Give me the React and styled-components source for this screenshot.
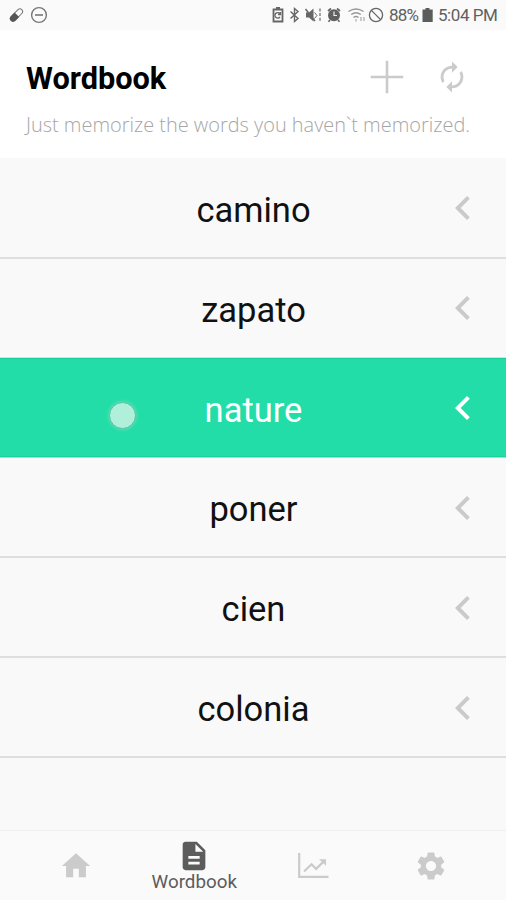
import React from "react";
import styled, { createGlobalStyle } from "styled-components";
import {
  MdAutorenew,
  MdChevronLeft,
  MdDescription,
  MdHome,
  MdSettings,
} from "react-icons/md";

const GlobalStyle = createGlobalStyle`
  * {
    box-sizing: border-box;
  }
  body {
    margin: 0;
    background-color: #fafafa;
    font-family: Roboto, "Liberation Sans", sans-serif;
  }
  svg {
    display: block;
    flex-shrink: 0;
  }
`;

const Screen = styled.div`
  display: flex;
  flex-direction: column;
  width: 506px;
  height: 900px;
  overflow: hidden;
`;

const StatusBar = styled.div`
  display: flex;
  justify-content: space-between;
  height: 30px;
  padding: 0 9px 0 8px;
  color: #606060;
  background-color: #fafafa;
`;

const StatusGroup = styled.div`
  display: flex;
  align-items: center;
  gap: ${({ gap }) => gap || 0}px;
  height: 30px;
`;

const StatusText = styled.span`
  width: ${({ width }) => width}px;
  padding-left: ${({ indent }) => indent || 0}px;
  font-size: 17px;
  line-height: 30px;
  letter-spacing: ${({ spacing }) => spacing}px;
  white-space: nowrap;
`;

const Header = styled.header`
  height: 128px;
  padding: 26px 26px 0;
  background-color: #fff;
`;

const TitleRow = styled.div`
  display: flex;
  align-items: center;
  justify-content: space-between;
  height: 42px;
`;

const Title = styled.h1`
  margin: 3px 0 0;
  font-size: 30.7px;
  font-weight: 700;
  line-height: 40px;
  color: #000;
`;

const Actions = styled.div`
  display: flex;
  align-items: center;
  gap: 31px;
  padding-right: 11.5px;
  color: #cbcbcb;
`;

const Subtitle = styled.p`
  margin: 14px 0 0;
  font-family: "Open Sans", "Noto Sans", sans-serif;
  font-size: 19.95px;
  font-weight: 300;
  line-height: 26px;
  color: #a6a6a6;
  white-space: nowrap;
`;

const WordList = styled.ul`
  flex: 1;
  margin: 0;
  padding: 0;
  list-style: none;
  background-color: #f9f9f9;
`;

const WordRow = styled.li`
  display: grid;
  grid-template-columns: 68px 1fr 48px;
  align-items: center;
  height: ${({ first }) => (first ? 101 : 99.8)}px;
  padding: 1px 19px 0 0;
  border-bottom: 2px solid #dedede;
  background-color: #f9f9f9;
  color: #cacaca;

  ${({ active }) =>
    active &&
    `
    margin: -1px 0 1px;
    padding-top: 2px;
    border-bottom: 1px solid #a9dccb;
    background-color: #23dda8;
    box-shadow: inset 0 1px #1bcd99, inset 0 -1px #1bd39d;
    color: #fff;
  `}
`;

const WordCell = styled.div`
  grid-column: 2;
  position: relative;
  display: flex;
  justify-content: center;
`;

const Word = styled.span`
  padding-top: 3px;
  font-size: 34.5px;
  line-height: 44px;
  text-align: center;
  color: ${({ active }) => (active ? "#fff" : "#111")};
`;

const TouchDot = styled.i`
  position: absolute;
  left: 41px;
  top: 17px;
  width: 27px;
  height: 27px;
  border: 1px solid #5cbfa3;
  border-radius: 50%;
  background-color: #b0f0da;
  box-shadow: 0 0 3px 1px rgba(120, 225, 190, 0.6);
`;

const TabBar = styled.nav`
  display: grid;
  grid-template-columns: repeat(4, 118.5px);
  justify-content: center;
  height: 70px;
  padding-left: 1px;
  border-top: 1px solid #f0f0f0;
  background-color: #fafafa;
`;

const Tab = styled.div`
  display: flex;
  flex-direction: column;
  align-items: center;
  padding-top: ${({ active }) => (active ? 8 : 18)}px;
  color: ${({ active }) => (active ? "#5c5c5c" : "#cbcbcb")};
`;

const TabLabel = styled.span`
  margin-top: -2px;
  font-size: 18.8px;
  line-height: 22px;
`;

const PillIcon = () => (
  <svg width="17" height="18" viewBox="0 0 17 18" fill="none">
    <g transform="rotate(45 8.5 9)">
      <rect x="5.8" y="1.5" width="5.4" height="15" rx="2.7" stroke="#777" strokeWidth="1" />
      <path d="M5.3 8.5h6.4v5.3a3.2 3.2 0 0 1-6.4 0z" fill="#555" />
    </g>
  </svg>
);

const MinusCircleIcon = () => (
  <svg width="18" height="18" viewBox="0 0 18 18" fill="none" stroke="#777">
    <circle cx="9" cy="9" r="7.4" strokeWidth="1.4" />
    <path d="M5 9h8" strokeWidth="1.6" />
  </svg>
);

// battery saver, bluetooth, mute, alarm, wifi, blocked
const DeviceIcons = () => (
  <svg width="118" height="30" viewBox="0 0 118 30" fill="none" stroke="#666">
    <path d="M2.5 9.5h9v12h-9zM5 8h4" strokeWidth="1.8" />
    <path d="M9.2 14A2.8 2.8 0 1 0 9 17M9.5 12v2.5H7" strokeWidth="1.3" />
    <path d="M19.5 11.5l7.500 7-3.500 3V8.500l3.500 3-7.500 7" strokeWidth="1.4" />
    <path d="M35 12.5h3l4.500-4v13l-4.500-4h-3z" fill="#666" stroke="none" />
    <path d="M34.500 9l9.500 12" strokeWidth="1.500" />
    <path d="M43.500 12.500l2.500 3-2.500 3" strokeWidth="1" />
    <path d="M49 8.500v13" strokeWidth="1.200" strokeDasharray="3 1.600" />
    <circle cx="63" cy="15.200" r="6" fill="#606060" stroke="none" />
    <path d="M57 11l3-2.500M66 8.500l3 2.500M59 20l-1.500 1.800M67 20l1.500 1.800" strokeWidth="1.700" />
    <path d="M63 11.500v4h3" stroke="#eee" strokeWidth="1.200" />
    <g stroke="#999">
      <path d="M77.500 11.500q7.500-5 15 0" strokeWidth="1.500" />
      <path d="M80.200 14.500q4.800-3.400 9.600 0M82.500 17.500q2.500-2 5 0" strokeWidth="1.500" />
      <path d="M85 19v2.500M90 17v4M93 17v4" strokeWidth="1" />
    </g>
    <circle cx="105" cy="15" r="6.600" strokeWidth="1.300" />
    <path d="M100.400 10.400l9.200 9.200" strokeWidth="1.300" />
  </svg>
);

const BatteryIcon = () => (
  <svg width="12" height="16" viewBox="0 0 12 16" fill="#5c5c5c">
    <path d="M3.500 1h4v1.500h3.200V15H.5V2.500h3z" />
  </svg>
);

const PlusIcon = () => (
  <svg width="34" height="34" viewBox="0 0 34 34" stroke="currentColor" strokeWidth="2.600">
    <path d="M17 .7v32.600M.7 17h32.600" />
  </svg>
);

const ChartIcon = () => (
  <svg width="34" height="34" viewBox="0 0 34 34" fill="none" stroke="currentColor">
    <path d="M3.200 4v23.800h29.300" strokeWidth="2.200" />
    <path d="M8 22.500l7.500-7.200 4.600 4.600 7.700-7.500" strokeWidth="2.200" />
    <path d="M23 10.200h7v6.500z" fill="currentColor" stroke="none" />
  </svg>
);

const words = ["camino", "zapato", "nature", "poner", "cien", "colonia"];

const App = () => {
  const selected = "nature";

  return (
    <>
      <GlobalStyle />
      <Screen>
        <StatusBar>
          <StatusGroup gap={5}>
            <PillIcon />
            <MinusCircleIcon />
          </StatusGroup>
          <StatusGroup>
            <DeviceIcons />
            <StatusText width={33} spacing={-0.8}>88%</StatusText>
            <BatteryIcon />
            <StatusText width={63} indent={4} spacing={-0.45}>5:04 PM</StatusText>
          </StatusGroup>
        </StatusBar>
        <Header>
          <TitleRow>
            <Title>Wordbook</Title>
            <Actions>
              <PlusIcon />
              <MdAutorenew size={34} />
            </Actions>
          </TitleRow>
          <Subtitle>Just memorize the words you haven`t memorized.</Subtitle>
        </Header>
        <WordList>
          {words.map((word, index) => (
            <WordRow key={word} first={index === 0} active={word === selected}>
              <WordCell>
                {word === selected && <TouchDot />}
                <Word active={word === selected}>{word}</Word>
              </WordCell>
              <MdChevronLeft size={48} />
            </WordRow>
          ))}
        </WordList>
        <TabBar>
          <Tab>
            <MdHome size={34} />
          </Tab>
          <Tab active>
            <MdDescription size={34} />
            <TabLabel>Wordbook</TabLabel>
          </Tab>
          <Tab>
            <ChartIcon />
          </Tab>
          <Tab>
            <MdSettings size={34} />
          </Tab>
        </TabBar>
      </Screen>
    </>
  );
};

export default App;
